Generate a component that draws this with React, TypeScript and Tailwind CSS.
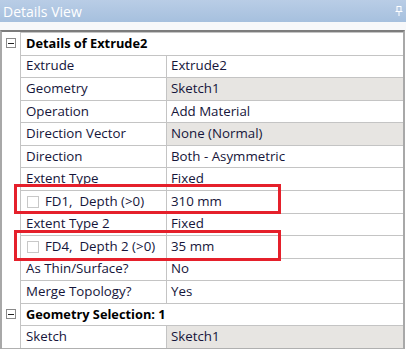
import React from "react";

type Row =
  | { kind: "section"; title: string }
  | { kind: "prop"; label: string; value: string; gray?: boolean; check?: boolean };

const rows: Row[] = [
  { kind: "section", title: "Details of Extrude2" },
  { kind: "prop", label: "Extrude", value: "Extrude2" },
  { kind: "prop", label: "Geometry", value: "Sketch1", gray: true },
  { kind: "prop", label: "Operation", value: "Add Material" },
  { kind: "prop", label: "Direction Vector", value: "None (Normal)", gray: true },
  { kind: "prop", label: "Direction", value: "Both - Asymmetric" },
  { kind: "prop", label: "Extent Type", value: "Fixed" },
  { kind: "prop", label: "FD1,  Depth (>0)", value: "310 mm", check: true },
  { kind: "prop", label: "Extent Type 2", value: "Fixed" },
  { kind: "prop", label: "FD4,  Depth 2 (>0)", value: "35 mm", check: true },
  { kind: "prop", label: "As Thin/Surface?", value: "No" },
  { kind: "prop", label: "Merge Topology?", value: "Yes" },
  { kind: "section", title: "Geometry Selection: 1" },
  { kind: "prop", label: "Sketch", value: "Sketch1", gray: true },
];

const MinusBox = () => (
  <div className="w-[10px] h-[10px] border border-[#8a8a8a] bg-white flex items-center justify-center">
    <div className="w-[6px] h-px bg-[#222]" />
  </div>
);

const PinIcon = () => (
  <svg width="8" height="10" viewBox="0 0 8 10" fill="none">
    <rect x="2" y="0.5" width="4" height="5" stroke="#fff" strokeWidth="1" />
    <line x1="0.5" y1="5.5" x2="7.5" y2="5.5" stroke="#fff" strokeWidth="1" />
    <line x1="4" y1="6" x2="4" y2="10" stroke="#fff" strokeWidth="1" />
  </svg>
);

export default function App() {
  return (
    <div
      className="relative w-[406px] h-[351px] bg-white overflow-hidden text-[13.3px] text-[#15153a]"
      style={{ fontFamily: '"Open Sans", "Noto Sans", Arial, sans-serif' }}
    >
      <div className="h-[22px] flex items-center justify-between pl-[3px] pr-[3px] bg-gradient-to-b from-[#b9cde6] to-[#a6c0de]">
        <span className="text-[14px] text-white">Details View</span>
        <PinIcon />
      </div>
      <div className="h-[8px] bg-[#f7f8fa]" />

      <div className="w-[405px] h-[319px] border-t-2 border-l-2 border-r-2 border-t-[#7c7c7c] border-l-[#a8a8a8] border-r-[#a8a8a8]">
        {rows.map((r, i) => (
          <div key={i} className="flex h-[22.57px]">
            <div className="w-[18px] shrink-0 flex items-center justify-center">
              {r.kind === "section" && <MinusBox />}
            </div>
            {r.kind === "section" ? (
              <div className="flex-1 border-l border-t border-[#c4c4c4] flex items-center pl-[5px] font-bold text-black text-[12.8px]">
                {r.title}
              </div>
            ) : (
              <>
                <div className="w-[146px] shrink-0 border-l border-t border-[#c4c4c4] flex items-center pl-[5px]">
                  {r.check && (
                    <div className="w-[12px] h-[12px] border border-[#c8c8c8] bg-white mr-[6px] ml-px" />
                  )}
                  <span className="whitespace-pre">{r.label}</span>
                </div>
                <div
                  className={`flex-1 border-l border-t border-[#c4c4c4] flex items-center pl-[4px] ${
                    r.gray ? "bg-[#e7e5e2]" : "bg-white"
                  }`}
                >
                  {r.value}
                </div>
              </>
            )}
          </div>
        ))}
        <div className="border-t border-[#b0b0b0]" />
      </div>

      <div className="absolute left-[14px] top-[184px] w-[267px] h-[30px] border-[3px] border-[#e5202b]" />
      <div className="absolute left-[14px] top-[230px] w-[267px] h-[31px] border-[3px] border-[#e5202b]" />
    </div>
  );
}
